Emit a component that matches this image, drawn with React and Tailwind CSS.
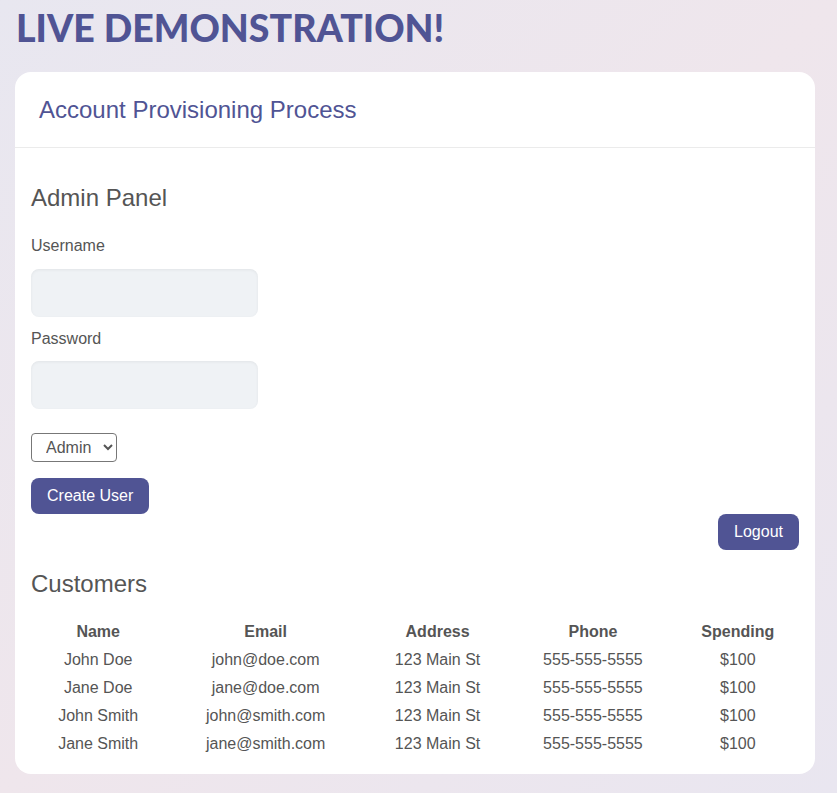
const customers = [
  { name: 'John Doe', email: 'john@doe.com', address: '123 Main St', phone: '555-555-5555', spending: '$100' },
  { name: 'Jane Doe', email: 'jane@doe.com', address: '123 Main St', phone: '555-555-5555', spending: '$100' },
  { name: 'John Smith', email: 'john@smith.com', address: '123 Main St', phone: '555-555-5555', spending: '$100' },
  { name: 'Jane Smith', email: 'jane@smith.com', address: '123 Main St', phone: '555-555-5555', spending: '$100' },
];

const App = () => {
  return (
    <div className="min-h-screen bg-gradient-to-br from-[#e8e7f0] via-[#efe6ec] to-[#e9e6f0] px-[15px] pb-5 font-['Liberation_Sans',Arial,sans-serif] text-[#555]">
      {/* Title */}
      <h1 className="pt-[8px] pl-[1px] h-[72px] font-['Lato',sans-serif] font-black text-[37.5px] leading-[40px] text-[#505494]">
        LIVE DEMONSTRATION!
      </h1>

      {/* Card */}
      <div className="w-[800px] bg-white rounded-2xl overflow-hidden">
        <div className="h-[76px] px-6 flex items-center border-b border-[#ebebeb]">
          <h2 className="text-[24px] text-[#505494]">Account Provisioning Process</h2>
        </div>

        <div className="px-4 pt-[36px] pb-[16px]">
          <h3 className="text-[24px] leading-[28px] mb-[25px]">Admin Panel</h3>

          <label className="block text-base leading-[18px] mb-[14px]">Username</label>
          <input className="block w-[227px] h-[48px] rounded-lg bg-[#eff2f5] shadow-[inset_0_1px_3px_rgba(0,0,0,0.06)] outline-none px-3 mb-[13px]" />

          <label className="block text-base leading-[18px] mb-[13px]">Password</label>
          <input type="password" className="block w-[227px] h-[48px] rounded-lg bg-[#eff2f5] shadow-[inset_0_1px_3px_rgba(0,0,0,0.06)] outline-none px-3 mb-[24px]" />

          <select className="block h-[29px] border border-[#777] rounded pl-[10px] pr-[8px] text-base text-[#555] bg-white mb-[16px]">
            <option>Admin</option>
            <option>User</option>
          </select>

          <button className="block h-[36px] px-4 rounded-lg bg-[#505494] text-white text-base">Create User</button>

          <div className="flex justify-end">
            <button className="h-[36px] px-4 rounded-lg bg-[#505494] text-white text-base">Logout</button>
          </div>

          <h3 className="text-[24px] leading-[28px] mt-[20px] mb-[20px]">Customers</h3>

          <table className="w-full text-center text-base">
            <thead>
              <tr className="h-[28px]">
                <th className="font-bold">Name</th>
                <th className="font-bold">Email</th>
                <th className="font-bold">Address</th>
                <th className="font-bold">Phone</th>
                <th className="font-bold">Spending</th>
              </tr>
            </thead>
            <tbody>
              {customers.map((c) => (
                <tr key={c.email} className="h-[28px]">
                  <td>{c.name}</td>
                  <td>{c.email}</td>
                  <td>{c.address}</td>
                  <td>{c.phone}</td>
                  <td>{c.spending}</td>
                </tr>
              ))}
            </tbody>
          </table>
        </div>
      </div>
    </div>
  );
};

export default App;
